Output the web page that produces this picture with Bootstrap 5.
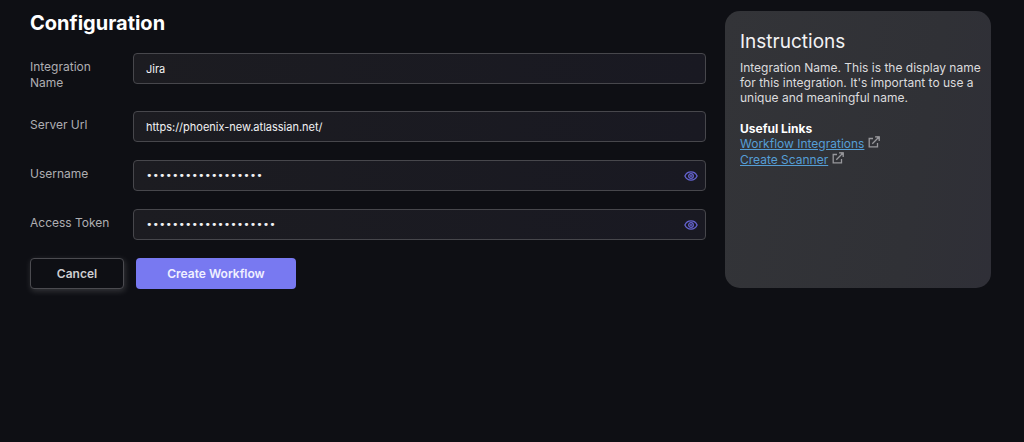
<!DOCTYPE html>
<html lang="en">
<head>
<meta charset="utf-8">
<meta name="viewport" content="width=device-width, initial-scale=1">
<title>Configuration</title>
<link href="https://cdn.jsdelivr.net/npm/bootstrap@5.3.0/dist/css/bootstrap.min.css" rel="stylesheet">
<style>
  body { background: #0e0f14; color: #dcdcde; font-family: Inter, "Liberation Sans", sans-serif; font-size: 12px; line-height: 15px; }
  .page { padding: 11px 33px 24px 30px; gap: 19px; }
  h1 { font-size: 20px; line-height: 24px; font-weight: 700; color: #fff; margin-bottom: 18px; }
  .field { margin-bottom: 18px; }
  .field-label { width: 103px; padding: 6px 20px 2px 0; font-size: 12px; line-height: 16px; color: #aeaeb2; }
  .field .form-control { height: 31px; padding: 0 12px; font-size: 11px; line-height: 16px; color: #f2f2f4; background: linear-gradient(90deg, #1c1c21, #191922); border: 1px solid #47474c; border-radius: 4px; }
  .field .form-control:focus { box-shadow: 0 0 0 2px #7879f155; }
  .field .secret { padding-right: 34px; font-family: "DejaVu Sans", sans-serif; }
  .reveal { right: 8px; color: #6463cf; line-height: 0; }
  .actions { gap: 12px; }
  .actions .btn { height: 31px; padding: 0; font-size: 12px; line-height: 16px; font-weight: 600; border-radius: 4px; }
  .btn-cancel, .btn-cancel:hover { width: 94px; color: #cdcdd0; background: #0e0f14; border: 1px solid #4b4b50; box-shadow: 1px 2px 6px #ffffff2b; }
  .btn-create, .btn-create:hover { width: 160px; color: #f0f0ff; background: #7879f1; border: 0; }
  .help { width: 266px; min-height: 277px; padding: 19px 10px 19px 15px; border-radius: 15px; background: linear-gradient(100deg, #333438, #303136 70%, #2f2f37); }
  .help h2 { font-size: 19px; line-height: 24px; font-weight: 400; color: #f2f2f4; margin-bottom: 6px; }
  .help h3 { font-size: 12px; line-height: 15px; font-weight: 700; color: #fff; margin: 0; }
  .help a { font-size: 12px; line-height: 16px; color: #559ed6; }
  .help li { height: 16px; gap: 4px; }
</style>
</head>
<body>
<svg class="d-none" aria-hidden="true">
  <symbol id="eye" viewBox="0 0 14 10"><g fill="none" stroke="currentColor" stroke-width="1.3"><path d="M.9 5C2.1 2.3 4.3.9 7 .9S11.900 2.300 13.100 5C11.900 7.700 9.700 9.100 7 9.100S2.100 7.700 .9 5Z"/><circle cx="7" cy="5" r="2.300"/></g><circle cx="7" cy="5" r="1" fill="currentColor"/></symbol>
  <symbol id="external" viewBox="0 0 12 12"><path d="M5 2.500H1.200V10.800H9.500V7M4.300 7.700 10.500 1.500M7 .8H11.200V5" fill="none" stroke="currentColor" stroke-width="1.300"/><path d="M8 .5H11.500V4Z" fill="currentColor"/></symbol>
</svg>
<div class="page d-flex align-items-start">
  <main class="flex-grow-1">
    <h1>Configuration</h1>
    <form>
      <div class="field d-flex align-items-start">
        <label class="field-label flex-shrink-0" for="name">Integration Name</label>
        <input class="form-control" id="name" type="text" value="Jira">
      </div>
      <div class="field d-flex align-items-start">
        <label class="field-label flex-shrink-0 pb-0" for="url">Server Url</label>
        <input class="form-control" id="url" type="text" value="https://phoenix-new.atlassian.net/">
      </div>
      <div class="field d-flex align-items-start">
        <label class="field-label flex-shrink-0 pb-0" for="user">Username</label>
        <div class="position-relative flex-grow-1">
          <input class="form-control secret" id="user" type="password" value="phoenix-jira-admin">
          <button class="reveal btn p-0 border-0 position-absolute top-50 translate-middle-y" type="button" aria-label="Show username"><svg width="14" height="10"><use href="#eye"/></svg></button>
        </div>
      </div>
      <div class="field d-flex align-items-start">
        <label class="field-label flex-shrink-0 pb-0" for="token">Access Token</label>
        <div class="position-relative flex-grow-1">
          <input class="form-control secret" id="token" type="password" value="abcdefghijklmnopqrst">
          <button class="reveal btn p-0 border-0 position-absolute top-50 translate-middle-y" type="button" aria-label="Show access token"><svg width="14" height="10"><use href="#eye"/></svg></button>
        </div>
      </div>
      <div class="actions d-flex">
        <button class="btn btn-cancel" type="button">Cancel</button>
        <button class="btn btn-create" type="submit">Create Workflow</button>
      </div>
    </form>
  </main>
  <aside class="help flex-shrink-0">
    <h2>Instructions</h2>
    <p class="mb-3">Integration Name. This is the display name for this integration. It's important to use a unique and meaningful name.</p>
    <h3>Useful Links</h3>
    <ul class="list-unstyled mb-0">
      <li class="d-flex"><a href="#workflow">Workflow Integrations</a><svg width="12" height="12" color="#97979b" aria-hidden="true"><use href="#external"/></svg></li>
      <li class="d-flex"><a href="#scanner">Create Scanner</a><svg width="12" height="12" color="#97979b" aria-hidden="true"><use href="#external"/></svg></li>
    </ul>
  </aside>
</div>
<script src="https://cdn.jsdelivr.net/npm/bootstrap@5.3.0/dist/js/bootstrap.bundle.min.js"></script>
</body>
</html>
